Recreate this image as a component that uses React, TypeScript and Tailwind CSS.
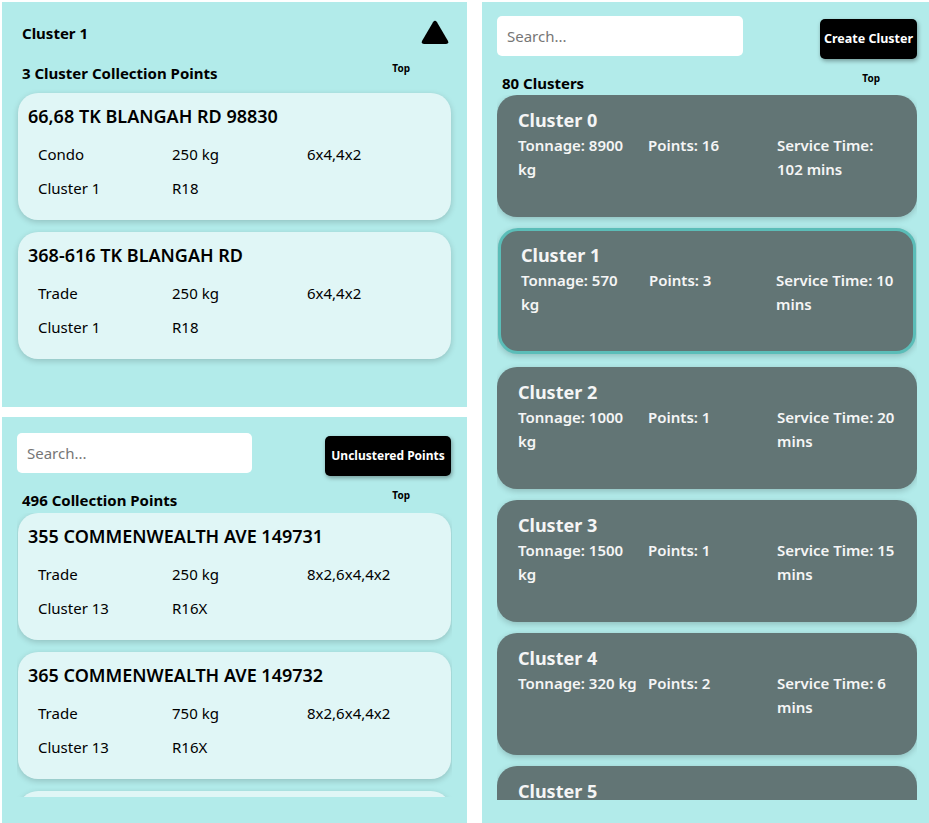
import React from "react";

type Point = {
  address: string;
  kind: string;
  weight: string;
  bins: string;
  cluster: string;
  route: string;
};

type Cluster = {
  name: string;
  tonnage: string[];
  points: number;
  service: string[];
};

const clusterPoints: Point[] = [
  { address: "66,68 TK BLANGAH RD 98830", kind: "Condo", weight: "250 kg", bins: "6x4,4x2", cluster: "Cluster 1", route: "R18" },
  { address: "368-616 TK BLANGAH RD", kind: "Trade", weight: "250 kg", bins: "6x4,4x2", cluster: "Cluster 1", route: "R18" },
];

const unclustered: Point[] = [
  { address: "355 COMMENWEALTH AVE 149731", kind: "Trade", weight: "250 kg", bins: "8x2,6x4,4x2", cluster: "Cluster 13", route: "R16X" },
  { address: "365 COMMENWEALTH AVE 149732", kind: "Trade", weight: "750 kg", bins: "8x2,6x4,4x2", cluster: "Cluster 13", route: "R16X" },
  { address: "366 COMMENWEALTH AVE 149733", kind: "Trade", weight: "250 kg", bins: "8x2,6x4,4x2", cluster: "Cluster 13", route: "R16X" },
];

const clusters: Cluster[] = [
  { name: "Cluster 0", tonnage: ["Tonnage: 8900", "kg"], points: 16, service: ["Service Time:", "102 mins"] },
  { name: "Cluster 1", tonnage: ["Tonnage: 570", "kg"], points: 3, service: ["Service Time: 10", "mins"] },
  { name: "Cluster 2", tonnage: ["Tonnage: 1000", "kg"], points: 1, service: ["Service Time: 20", "mins"] },
  { name: "Cluster 3", tonnage: ["Tonnage: 1500", "kg"], points: 1, service: ["Service Time: 15", "mins"] },
  { name: "Cluster 4", tonnage: ["Tonnage: 320 kg"], points: 2, service: ["Service Time: 6", "mins"] },
  { name: "Cluster 5", tonnage: ["Tonnage: 410 kg"], points: 2, service: ["Service Time: 8", "mins"] },
];

function PointCard({ p }: { p: Point }) {
  return (
    <div className="shrink-0 h-[127px] rounded-[20px] bg-[#e0f6f6] shadow-[0_2px_6px_rgba(0,0,0,0.18)] px-[10px] pt-[11px]">
      <div className="text-[18px] font-semibold leading-[24px] text-black">{p.address}</div>
      <div className="mt-[14px] grid grid-cols-[134px_135px_1fr] gap-y-[10px] pl-[10px] text-[15px] leading-[24px] text-black">
        <div>{p.kind}</div>
        <div>{p.weight}</div>
        <div>{p.bins}</div>
        <div>{p.cluster}</div>
        <div>{p.route}</div>
        <div></div>
      </div>
    </div>
  );
}

function Lines({ lines }: { lines: string[] }) {
  return (
    <div className="whitespace-nowrap">
      {lines.map((l) => (
        <div key={l}>{l}</div>
      ))}
    </div>
  );
}

function ClusterCard({ c, selected }: { c: Cluster; selected?: boolean }) {
  return (
    <div
      className={
        selected
          ? "shrink-0 h-[126px] mx-[1px] mb-[2px] rounded-[20px] bg-[#627575] border-[3px] border-[#5bbdb8] shadow-[0_2px_6px_rgba(0,0,0,0.2)] pl-[20px] pr-[8px] pt-[12px] text-[#f5f5f5]"
          : "shrink-0 h-[122px] rounded-[20px] bg-[#627575] shadow-[0_2px_6px_rgba(0,0,0,0.2)] pl-[21px] pr-[10px] pt-[13px] text-[#f5f5f5]"
      }
    >
      <div className="text-[18px] font-bold leading-[24px]">{c.name}</div>
      <div
        className={`mt-[1px] grid text-[15px] font-semibold leading-[24px] ${
          selected ? "grid-cols-[128px_127px_1fr]" : "grid-cols-[130px_129px_1fr]"
        }`}
      >
        <Lines lines={c.tonnage} />
        <div>Points: {c.points}</div>
        <Lines lines={c.service} />
      </div>
    </div>
  );
}

function ListHeading({ label, right }: { label: string; right: string }) {
  return (
    <div className={`flex items-start justify-between pl-[4px] ${right}`}>
      <div className="text-[15px] font-bold leading-[20px] text-black pt-[1px]">{label}</div>
      <div className="text-[10px] font-bold leading-[12px] text-black">Top</div>
    </div>
  );
}

function SearchBox({ width }: { width: string }) {
  return (
    <input
      type="text"
      placeholder="Search..."
      className={`${width} h-[40px] rounded-[5px] bg-white px-[10px] text-[15px] text-black placeholder:text-[#767676] outline-none`}
    />
  );
}

function TriangleIcon() {
  return (
    <svg width="28" height="25" viewBox="0 0 28 25">
      <path d="M12 2.2 Q14 -0.6 16 2.2 L27 21 Q28 24 25 24 L3 24 Q0 24 1 21 Z" fill="#000" />
    </svg>
  );
}

export default function App() {
  return (
    <div
      className="w-[929px] h-[823px] bg-white flex pl-[2px] pt-[2px] overflow-hidden"
      style={{ fontFamily: '"Noto Sans", "Open Sans", sans-serif' }}
    >
      <div className="w-[465px] flex flex-col gap-[10px] shrink-0">
        <section className="h-[405px] bg-[#b2ebea] px-[16px] pt-[18px]">
          <div className="flex items-center justify-between pl-[4px] pr-[2px]">
            <div className="text-[15px] font-bold leading-[20px] text-black">Cluster 1</div>
            <TriangleIcon />
          </div>
          <div className="mt-[17px]">
            <ListHeading label="3 Cluster Collection Points" right="pr-[41px]" />
          </div>
          <div className="mt-[10px] flex flex-col gap-[12px]">
            {clusterPoints.map((p) => (
              <PointCard key={p.address} p={p} />
            ))}
          </div>
        </section>

        <section className="flex-1 bg-[#b2ebea] px-[16px] pt-[16px]">
          <div className="flex items-start justify-between">
            <div className="-ml-[1px]">
              <SearchBox width="w-[235px]" />
            </div>
            <button className="mt-[3px] h-[40px] w-[126px] rounded-[5px] bg-black text-[12px] font-bold text-white shadow-[1px_2px_4px_rgba(0,0,0,0.35)]">
              Unclustered Points
            </button>
          </div>
          <div className="mt-[13px]">
            <ListHeading label="496 Collection Points" right="pr-[41px]" />
          </div>
          <div className="mt-[3px] h-[284px] overflow-hidden flex flex-col gap-[12px] px-[1px] -mx-[1px]">
            {unclustered.map((p) => (
              <PointCard key={p.address} p={p} />
            ))}
          </div>
        </section>
      </div>

      <section className="ml-[15px] flex-1 bg-[#b2ebea] pl-[15px] pr-[12px] pt-[14px]">
        <div className="flex items-start justify-between">
          <SearchBox width="w-[246px]" />
          <button className="mt-[3px] h-[40px] w-[97px] rounded-[5px] bg-black text-[12.5px] font-bold text-white shadow-[1px_2px_4px_rgba(0,0,0,0.35)]">
            Create Cluster
          </button>
        </div>
        <div className="mt-[13px]">
          <ListHeading label="80 Clusters" right="pr-[37px] pl-[5px]" />
        </div>
        <div className="mt-[2px] h-[705px] overflow-hidden flex flex-col gap-[11px]">
          {clusters.map((c, i) => (
            <ClusterCard key={c.name} c={c} selected={i === 1} />
          ))}
        </div>
      </section>
    </div>
  );
}
